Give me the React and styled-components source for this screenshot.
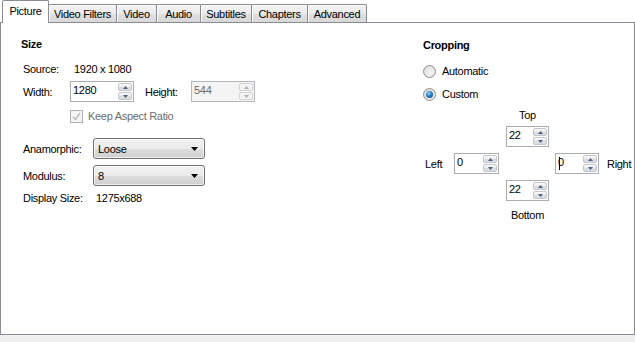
import React from 'react';
import styled, { createGlobalStyle } from 'styled-components';

const Global = createGlobalStyle`
  html, body { margin: 0; padding: 0; background: #fff; }
  body {
    font-family: "Liberation Sans", Arial, sans-serif;
    font-size: 11px;
    letter-spacing: -0.3px;
    color: #000;
  }
`;

const Window = styled.div`
  width: 635px;
  height: 342px;
  display: flex;
  flex-direction: column;
  background: #fff;
  overflow: hidden;
`;

const TabBar = styled.div`
  display: flex;
  align-items: flex-end;
  height: 22px;
  padding-left: 2px;
  position: relative;
  z-index: 1;
`;

const Tab = styled.div`
  box-sizing: border-box;
  width: ${p => p.$w}px;
  height: ${p => (p.$active ? 23 : 18)}px;
  margin-bottom: ${p => (p.$active ? -1 : 0)}px;
  margin-left: ${p => (p.$first ? 0 : -1)}px;
  border: 1px solid #898c95;
  border-bottom: none;
  border-radius: 2px 2px 0 0;
  background: ${p =>
    p.$active
      ? '#fff'
      : 'linear-gradient(#f3f3f3 0%, #ebebeb 50%, #e0e0e0 51%, #d8d8d8 100%)'};
  box-shadow: ${p => (p.$active ? 'none' : 'inset 1px 1px 0 #fcfcfc')};
  display: flex;
  justify-content: center;
  align-items: ${p => (p.$active ? 'flex-start' : 'center')};
  padding-top: ${p => (p.$active ? 4 : 1)}px;
  line-height: 13px;
  white-space: nowrap;
`;

const Panel = styled.div`
  box-sizing: border-box;
  height: 313px;
  border: 1px solid #898c95;
  background: #fff;
  display: grid;
  grid-template-columns: 422px 1fr;
  align-items: start;
`;

const Footer = styled.div`
  flex: 1;
  background: #f0f0f0;
`;

const Column = styled.div`
  display: flex;
  flex-direction: column;
  padding-left: ${p => p.$pad}px;
`;

const GroupTitle = styled.div`
  font-weight: bold;
  line-height: 14px;
  margin-top: ${p => p.$top}px;
`;

const Row = styled.div`
  display: flex;
  align-items: center;
  height: ${p => p.$h}px;
  margin-top: ${p => p.$top}px;
  padding-left: ${p => p.$indent || 0}px;
  line-height: 14px;
  white-space: nowrap;
`;

const Label = styled.span`
  width: ${p => p.$w}px;
  flex: none;
  color: ${p => (p.$muted ? '#6d6d6d' : '#000')};
`;

const SpinBox = styled.div`
  box-sizing: border-box;
  width: ${p => p.$w}px;
  height: 21px;
  border: 1px solid ${p => (p.$disabled ? '#b4b8bd' : '#abadb3')};
  background: ${p => (p.$disabled ? '#f4f4f4' : '#fff')};
  display: flex;
  align-items: flex-start;
  padding: 1px 1px 1px 2px;
  position: relative;
  flex: none;
`;

const SpinValue = styled.span`
  flex: 1;
  line-height: 15px;
  color: ${p => (p.$disabled ? '#6d6d6d' : '#000')};
`;

const SpinButtons = styled.div`
  display: flex;
  flex-direction: column;
  gap: 1px;
  width: 14px;
  height: 17px;
`;

const SpinBtn = styled.div`
  flex: 1;
  box-sizing: border-box;
  border: 1px solid ${p => (p.$disabled ? '#d4d4d4' : '#c3c6cc')};
  border-radius: 2px;
  background: ${p =>
    p.$disabled
      ? '#f4f4f4'
      : 'linear-gradient(#fafafa 0%, #eaeaea 50%, #dcdcdc 51%, #d9dde2 100%)'};
  display: flex;
  align-items: center;
  justify-content: center;
`;

const Caret = styled.span`
  position: absolute;
  left: 3px;
  top: 3px;
  width: 1px;
  height: 13px;
  background: #000;
`;

const Select = styled.div`
  box-sizing: border-box;
  width: 112px;
  height: 21px;
  border: 1px solid #707070;
  border-radius: 3px;
  background: linear-gradient(#f2f2f2 0%, #ebebeb 50%, #dddddd 51%, #cfcfcf 100%);
  box-shadow: inset 0 0 0 1px rgba(255, 255, 255, 0.7);
  display: flex;
  align-items: center;
  justify-content: space-between;
  padding: 0 6px 0 4px;
  flex: none;
`;

const CheckBox = styled.span`
  box-sizing: border-box;
  width: 13px;
  height: 13px;
  border: 1px solid #b1b1b1;
  background: #f4f4f4;
  display: flex;
  align-items: center;
  justify-content: center;
  margin-right: 5px;
  flex: none;
`;

const RadioCircle = styled.span`
  box-sizing: border-box;
  width: 13px;
  height: 13px;
  border-radius: 50%;
  border: 1px solid #8e8f8f;
  background: radial-gradient(circle at 60% 60%, #f4f4f4 0%, #e6e6e6 50%, #cfcfcf 100%);
  display: flex;
  align-items: center;
  justify-content: center;
  margin-right: 6px;
  flex: none;
`;

const RadioDot = styled.span`
  width: 7px;
  height: 7px;
  border-radius: 50%;
  background: radial-gradient(circle at 40% 35%, #9bd6ff 0%, #2b7dc4 45%, #0c3d74 100%);
`;

const CropGrid = styled.div`
  display: grid;
  grid-template-columns: 29px 45px 7px 43px 6px 44px 8px auto;
  grid-template-rows: 14px 4px 21px 6px 21px 6px 21px 7px 14px;
  margin-top: 7px;
  margin-left: 2px;
  line-height: 14px;
`;

const Cell = styled.div`
  grid-column: ${p => p.$col};
  grid-row: ${p => p.$row};
  align-self: center;
  text-align: ${p => (p.$center ? 'center' : 'left')};
  white-space: nowrap;
`;

const Arrow = ({ up, color }) => (
  <svg width="5" height="3" viewBox="0 0 5 3">
    <path d={up ? 'M0 3 L2.5 0 L5 3 Z' : 'M0 0 L5 0 L2.5 3 Z'} fill={color} />
  </svg>
);

const Spinner = ({ value, width, disabled, caret }) => {
  const c = disabled ? '#b0b0b0' : '#4d6185';
  return (
    <SpinBox $w={width} $disabled={disabled}>
      <SpinValue $disabled={disabled}>{value}</SpinValue>
      {caret && <Caret />}
      <SpinButtons>
        <SpinBtn $disabled={disabled}><Arrow up color={c} /></SpinBtn>
        <SpinBtn $disabled={disabled}><Arrow color={c} /></SpinBtn>
      </SpinButtons>
    </SpinBox>
  );
};

const Dropdown = ({ value }) => (
  <Select>
    <span>{value}</span>
    <svg width="7" height="4" viewBox="0 0 7 4">
      <path d="M0 0 L7 0 L3.5 4 Z" fill="#000" />
    </svg>
  </Select>
);

const tabs = [
  { name: 'Picture', w: 47, active: true },
  { name: 'Video Filters', w: 69 },
  { name: 'Video', w: 41 },
  { name: 'Audio', w: 45 },
  { name: 'Subtitles', w: 52 },
  { name: 'Chapters', w: 57 },
  { name: 'Advanced', w: 60 },
];

export default function App() {
  return (
    <Window>
      <Global />
      <TabBar>
        {tabs.map((t, i) => (
          <Tab key={t.name} $w={t.w} $active={t.active} $first={i === 0}>
            {t.name}
          </Tab>
        ))}
      </TabBar>
      <Panel>
        <Column $pad={20}>
          <GroupTitle $top={14}>Size</GroupTitle>
          <Row $top={11} $h={14} $indent={2}>
            <Label $w={51}>Source:</Label>
            <span>1920 x 1080</span>
          </Row>
          <Row $top={5} $h={21} $indent={2}>
            <Label $w={47}>Width:</Label>
            <Spinner value="1280" width={64} />
            <Label $w={46} style={{ marginLeft: 11 }}>Height:</Label>
            <Spinner value="544" width={64} disabled />
          </Row>
          <Row $top={7} $h={14} $indent={49}>
            <CheckBox>
              <svg width="9" height="9" viewBox="0 0 9 9">
                <path d="M1 5 L3.5 7.5 L8 1" stroke="#b9b9b9" strokeWidth="1.4" fill="none" />
              </svg>
            </CheckBox>
            <Label $muted>Keep Aspect Ratio</Label>
          </Row>
          <Row $top={15} $h={21} $indent={2}>
            <Label $w={70}>Anamorphic:</Label>
            <Dropdown value="Loose" />
          </Row>
          <Row $top={6} $h={21} $indent={2}>
            <Label $w={70}>Modulus:</Label>
            <Dropdown value="8" />
          </Row>
          <Row $top={5} $h={14} $indent={2}>
            <Label $w={73}>Display Size:</Label>
            <span>1275x688</span>
          </Row>
        </Column>
        <Column $pad={0}>
          <GroupTitle $top={15}>Cropping</GroupTitle>
          <Row $top={12} $h={14}>
            <RadioCircle />
            <span>Automatic</span>
          </Row>
          <Row $top={9} $h={14}>
            <RadioCircle><RadioDot /></RadioCircle>
            <span>Custom</span>
          </Row>
          <CropGrid>
            <Cell $col={4} $row={1} $center>Top</Cell>
            <Cell $col={4} $row={3}><Spinner value="22" width={43} /></Cell>
            <Cell $col={1} $row={5}>Left</Cell>
            <Cell $col={2} $row={5}><Spinner value="0" width={45} /></Cell>
            <Cell $col={6} $row={5}><Spinner value="0" width={44} caret /></Cell>
            <Cell $col={8} $row={5}>Right</Cell>
            <Cell $col={4} $row={7}><Spinner value="22" width={43} /></Cell>
            <Cell $col={4} $row={9} $center>Bottom</Cell>
          </CropGrid>
        </Column>
      </Panel>
      <Footer />
    </Window>
  );
}
